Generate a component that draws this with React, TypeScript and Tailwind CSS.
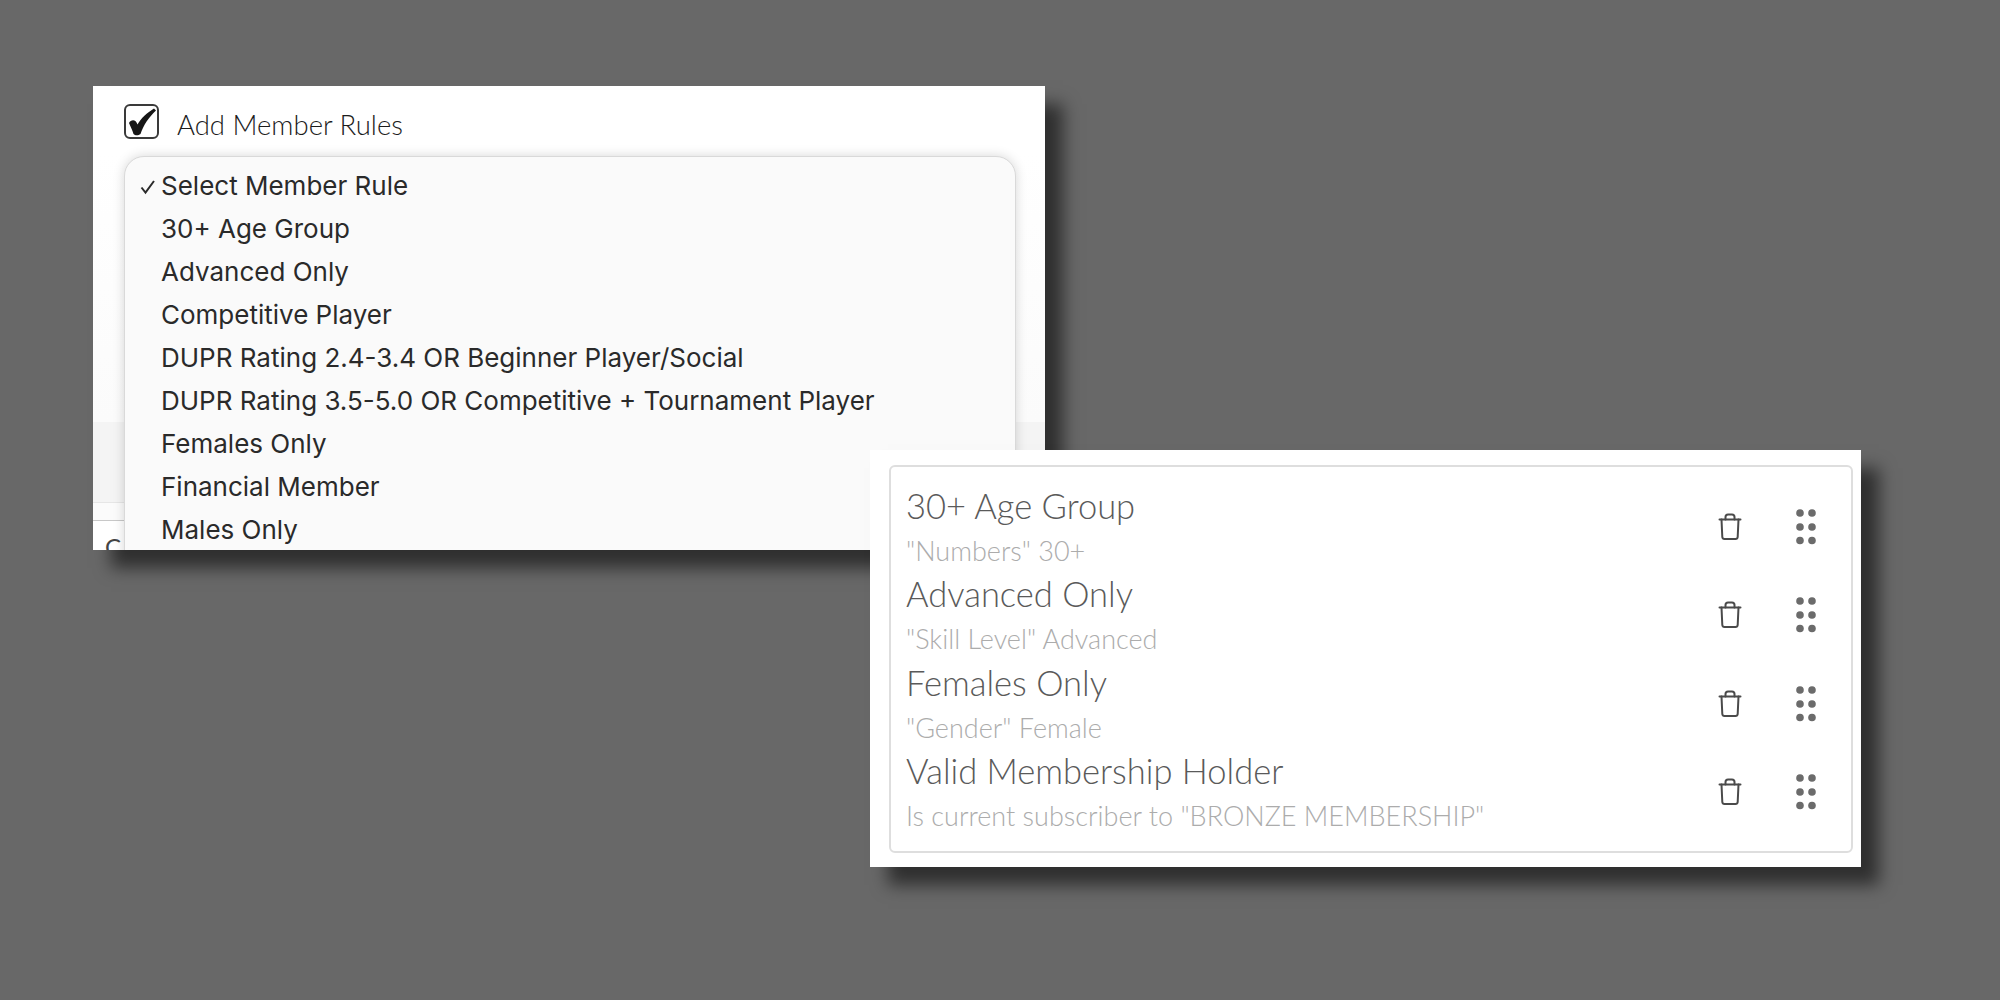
import React from 'react';

const options = [
  '30+ Age Group',
  'Advanced Only',
  'Competitive Player',
  'DUPR Rating 2.4-3.4 OR Beginner Player/Social',
  'DUPR Rating 3.5-5.0 OR Competitive + Tournament Player',
  'Females Only',
  'Financial Member',
  'Males Only',
];

const rules = [
  { title: '30+ Age Group', detail: '"Numbers" 30+' },
  { title: 'Advanced Only', detail: '"Skill Level" Advanced' },
  { title: 'Females Only', detail: '"Gender" Female' },
  { title: 'Valid Membership Holder', detail: 'Is current subscriber to "BRONZE MEMBERSHIP"' },
];

function TrashIcon() {
  return (
    <svg width="24" height="28" viewBox="0 0 24 28" fill="none" stroke="#4a4a4a" strokeWidth="2" strokeLinecap="round" strokeLinejoin="round">
      <path d="M1.5 6.5h21" />
      <path d="M7.5 6.5V4a2.5 2.5 0 0 1 2.5-2.5h4A2.5 2.5 0 0 1 16.5 4v2.5" />
      <path d="M3.5 6.5l.8 17.5a2.2 2.2 0 0 0 2.2 2h11a2.2 2.2 0 0 0 2.2-2l.8-17.5" />
    </svg>
  );
}

function GripIcon() {
  return (
    <svg width="20" height="36" viewBox="0 0 20 36" fill="#6b6b6b">
      <circle cx="4" cy="4" r="3.8" />
      <circle cx="16" cy="4" r="3.8" />
      <circle cx="4" cy="18" r="3.8" />
      <circle cx="16" cy="18" r="3.8" />
      <circle cx="4" cy="31.5" r="3.8" />
      <circle cx="16" cy="31.5" r="3.8" />
    </svg>
  );
}

function CheckedBox() {
  return (
    <div className="w-[35px] h-[35px] rounded-[6px] border-2 border-[#3a3a3a] bg-white">
      <svg width="31" height="31" viewBox="0 0 31 31" fill="#161616">
        <path d="M3 17C5 13 10 13 11.5 18.5 15 12 21 7 28 2.5L30 4.5C23 11 17.5 19 14.5 28 12 30 9 29.5 7.5 28 6.5 24 4.5 21 3 17Z" />
      </svg>
    </div>
  );
}

function MemberRulesPanel() {
  return (
    <div className="absolute left-[93px] top-[86px] w-[952px] h-[464px] bg-white overflow-hidden shadow-[18px_18px_16px_rgba(0,0,0,0.55)]">
      <div className="flex items-start gap-[18px] pl-[31px] pt-[18px] h-[336px] bg-gradient-to-b from-white from-[20%] to-[#fbfbfb]">
        <CheckedBox />
        <span className="text-[27.5px] leading-[35px] mt-[3px] font-light text-[#1c1c1c] font-['Lato',sans-serif]">Add Member Rules</span>
      </div>
      {/* page bits showing behind the dropdown */}
      <div className="h-[80px] bg-[#f4f4f4]" />
      <div className="h-[18px] bg-[#fbfbfb] border-t border-[#e6e6e6]" />
      <div className="h-px bg-[#c8c8c8]" />
      <div className="pl-[12px] pt-[14px] text-[24px] leading-none text-[#444] font-['Lato',sans-serif]">C</div>

      {/* open select menu */}
      <div className="absolute left-[31px] top-[70px] w-[892px] h-[420px] bg-[#fafafa] rounded-[20px] border border-[#d9d9d9] shadow-[0_0_12px_rgba(0,0,0,0.16)] pt-[7.5px] font-['Inter',sans-serif] text-[26px] text-[#2a2a2a]">
        <div className="h-[42.9px] flex items-center pl-[36px] relative">
          <svg className="absolute left-[15px] top-[14px]" width="16" height="16" viewBox="0 0 16 16" fill="none" stroke="#2a2a2a" strokeWidth="2">
            <path d="M1.5 8.5 5.5 13.5 14 2" />
          </svg>
          Select Member Rule
        </div>
        {options.map((o) => (
          <div key={o} className="h-[42.9px] flex items-center pl-[36px] whitespace-nowrap">{o}</div>
        ))}
      </div>
    </div>
  );
}

function RuleRow({ title, detail }: { title: string; detail: string }) {
  return (
    <div className="h-[88.3px] flex items-center">
      <div className="flex-1 pt-[7px] font-['Lato',sans-serif] font-light">
        <div className="text-[34.5px] leading-[44px] text-[#5a5a5a]">{title}</div>
        <div className="text-[27px] leading-[45px] text-[#acacac]">{detail}</div>
      </div>
      <div className="mr-[54px] mt-[4px]"><TrashIcon /></div>
      <div className="mr-[35px] mt-[4px]"><GripIcon /></div>
    </div>
  );
}

function SelectedRulesPanel() {
  return (
    <div className="absolute left-[870px] top-[450px] w-[991px] h-[417px] bg-white pt-[15px] pr-[8px] pb-[14px] pl-[19px] shadow-[18px_18px_16px_rgba(0,0,0,0.55)]">
      <div className="h-full rounded-[6px] border-2 border-[#dedede] pl-[15px] pt-[14px]">
        {rules.map((r) => (
          <RuleRow key={r.title} title={r.title} detail={r.detail} />
        ))}
      </div>
    </div>
  );
}

export default function App() {
  return (
    <div className="relative w-[2000px] h-[1000px] bg-[#686868] overflow-hidden">
      <MemberRulesPanel />
      <SelectedRulesPanel />
    </div>
  );
}
